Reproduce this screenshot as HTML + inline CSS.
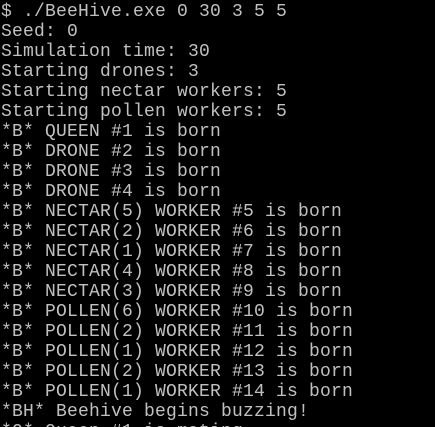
<!DOCTYPE html>
<html><head><style>
html,body{margin:0;padding:0;background:#000;width:435px;height:427px;overflow:hidden}
pre{margin:0;padding:2px 0 0 1px;font-family:"Liberation Mono","DejaVu Sans Mono",monospace;font-size:18px;line-height:20px;letter-spacing:0.2px;color:#c0c0c0}
</style></head><body><pre>$ ./BeeHive.exe 0 30 3 5 5
Seed: 0
Simulation time: 30
Starting drones: 3
Starting nectar workers: 5
Starting pollen workers: 5
*B* QUEEN #1 is born
*B* DRONE #2 is born
*B* DRONE #3 is born
*B* DRONE #4 is born
*B* NECTAR(5) WORKER #5 is born
*B* NECTAR(2) WORKER #6 is born
*B* NECTAR(1) WORKER #7 is born
*B* NECTAR(4) WORKER #8 is born
*B* NECTAR(3) WORKER #9 is born
*B* POLLEN(6) WORKER #10 is born
*B* POLLEN(2) WORKER #11 is born
*B* POLLEN(1) WORKER #12 is born
*B* POLLEN(2) WORKER #13 is born
*B* POLLEN(1) WORKER #14 is born
*BH* Beehive begins buzzing!
*Q* Queen #1 is mating...</pre></body></html>
